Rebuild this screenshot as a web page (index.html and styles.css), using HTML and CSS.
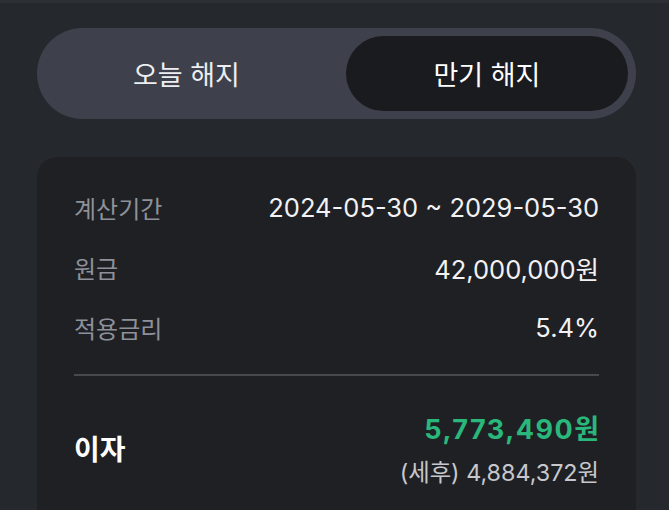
FILE: index.html
```html
<!DOCTYPE html>
<html lang="ko">
<head>
<meta charset="utf-8">
<link rel="stylesheet" href="styles.css">
</head>
<body>
<div class="topline"></div>
<main class="page">
  <div class="segment">
    <div class="seg-item">오늘 해지</div>
    <div class="seg-item active">만기 해지</div>
  </div>
  <section class="card">
    <div class="row">
      <span class="label">계산기간</span>
      <span class="value">2024-05-30 ~ 2029-05-30</span>
    </div>
    <div class="row">
      <span class="label">원금</span>
      <span class="value">42,000,000원</span>
    </div>
    <div class="row">
      <span class="label">적용금리</span>
      <span class="value">5.4%</span>
    </div>
    <div class="divider"></div>
    <div class="interest">
      <span class="interest-label">이자</span>
      <div class="interest-values">
        <span class="interest-amount">5,773,490원</span>
        <span class="interest-after">(세후) 4,884,372원</span>
      </div>
    </div>
  </section>
</main>
</body>
</html>
```
FILE: styles.css
```css
* { box-sizing: border-box; }
html, body {
  margin: 0;
  padding: 0;
  background: #25282d;
  height: 100%;
  overflow: hidden;
}
body {
  font-family: Inter, "Noto Sans CJK KR", sans-serif;
  color: #f0f0f2;
}
.topline {
  height: 3px;
  background: #2c2f34;
}
.page {
  padding: 25px 33px 0 37px;
}
.segment {
  display: grid;
  grid-template-columns: 1fr 282px;
  height: 91px;
  padding: 8px;
  border-radius: 46px;
  background: #3e414b;
}
.seg-item {
  display: flex;
  align-items: center;
  justify-content: center;
  font-family: "Noto Sans CJK KR", sans-serif;
  font-size: 27px;
  color: #eceef1;
  padding-right: 18px;
  padding-bottom: 1px;
}
.seg-item.active {
  background: #1a1b1f;
  border-radius: 38px;
  color: #ffffff;
  padding-right: 0;
}
.card {
  margin-top: 38px;
  background: #1f2024;
  border-radius: 20px;
  padding: 20px 37px 40px;
  min-height: 360px;
}
.row {
  display: flex;
  justify-content: space-between;
  align-items: center;
  height: 60px;
}
.label {
  font-family: "Noto Sans CJK KR", sans-serif;
  font-size: 24px;
  color: #8e9199;
}
.value {
  font-size: 25.5px;
  color: #f2f2f4;
}
.divider {
  height: 2px;
  background: #47494f;
  margin-top: 17px;
}
.interest {
  display: flex;
  justify-content: space-between;
  align-items: center;
  padding-top: 36px;
}
.interest-label {
  font-family: "Noto Sans CJK KR", sans-serif;
  font-size: 28px;
  font-weight: 700;
  color: #ffffff;
  margin-bottom: 4px;
}
.interest-values {
  display: flex;
  flex-direction: column;
  align-items: flex-end;
}
.interest-amount {
  font-size: 27px;
  font-weight: 700;
  letter-spacing: 1.5px;
  margin-right: -1.5px;
  line-height: 36px;
  color: #2ab77b;
}
.interest-after {
  margin-top: 10px;
  font-size: 23.3px;
  line-height: 30px;
  color: #c6c8cd;
}
```
